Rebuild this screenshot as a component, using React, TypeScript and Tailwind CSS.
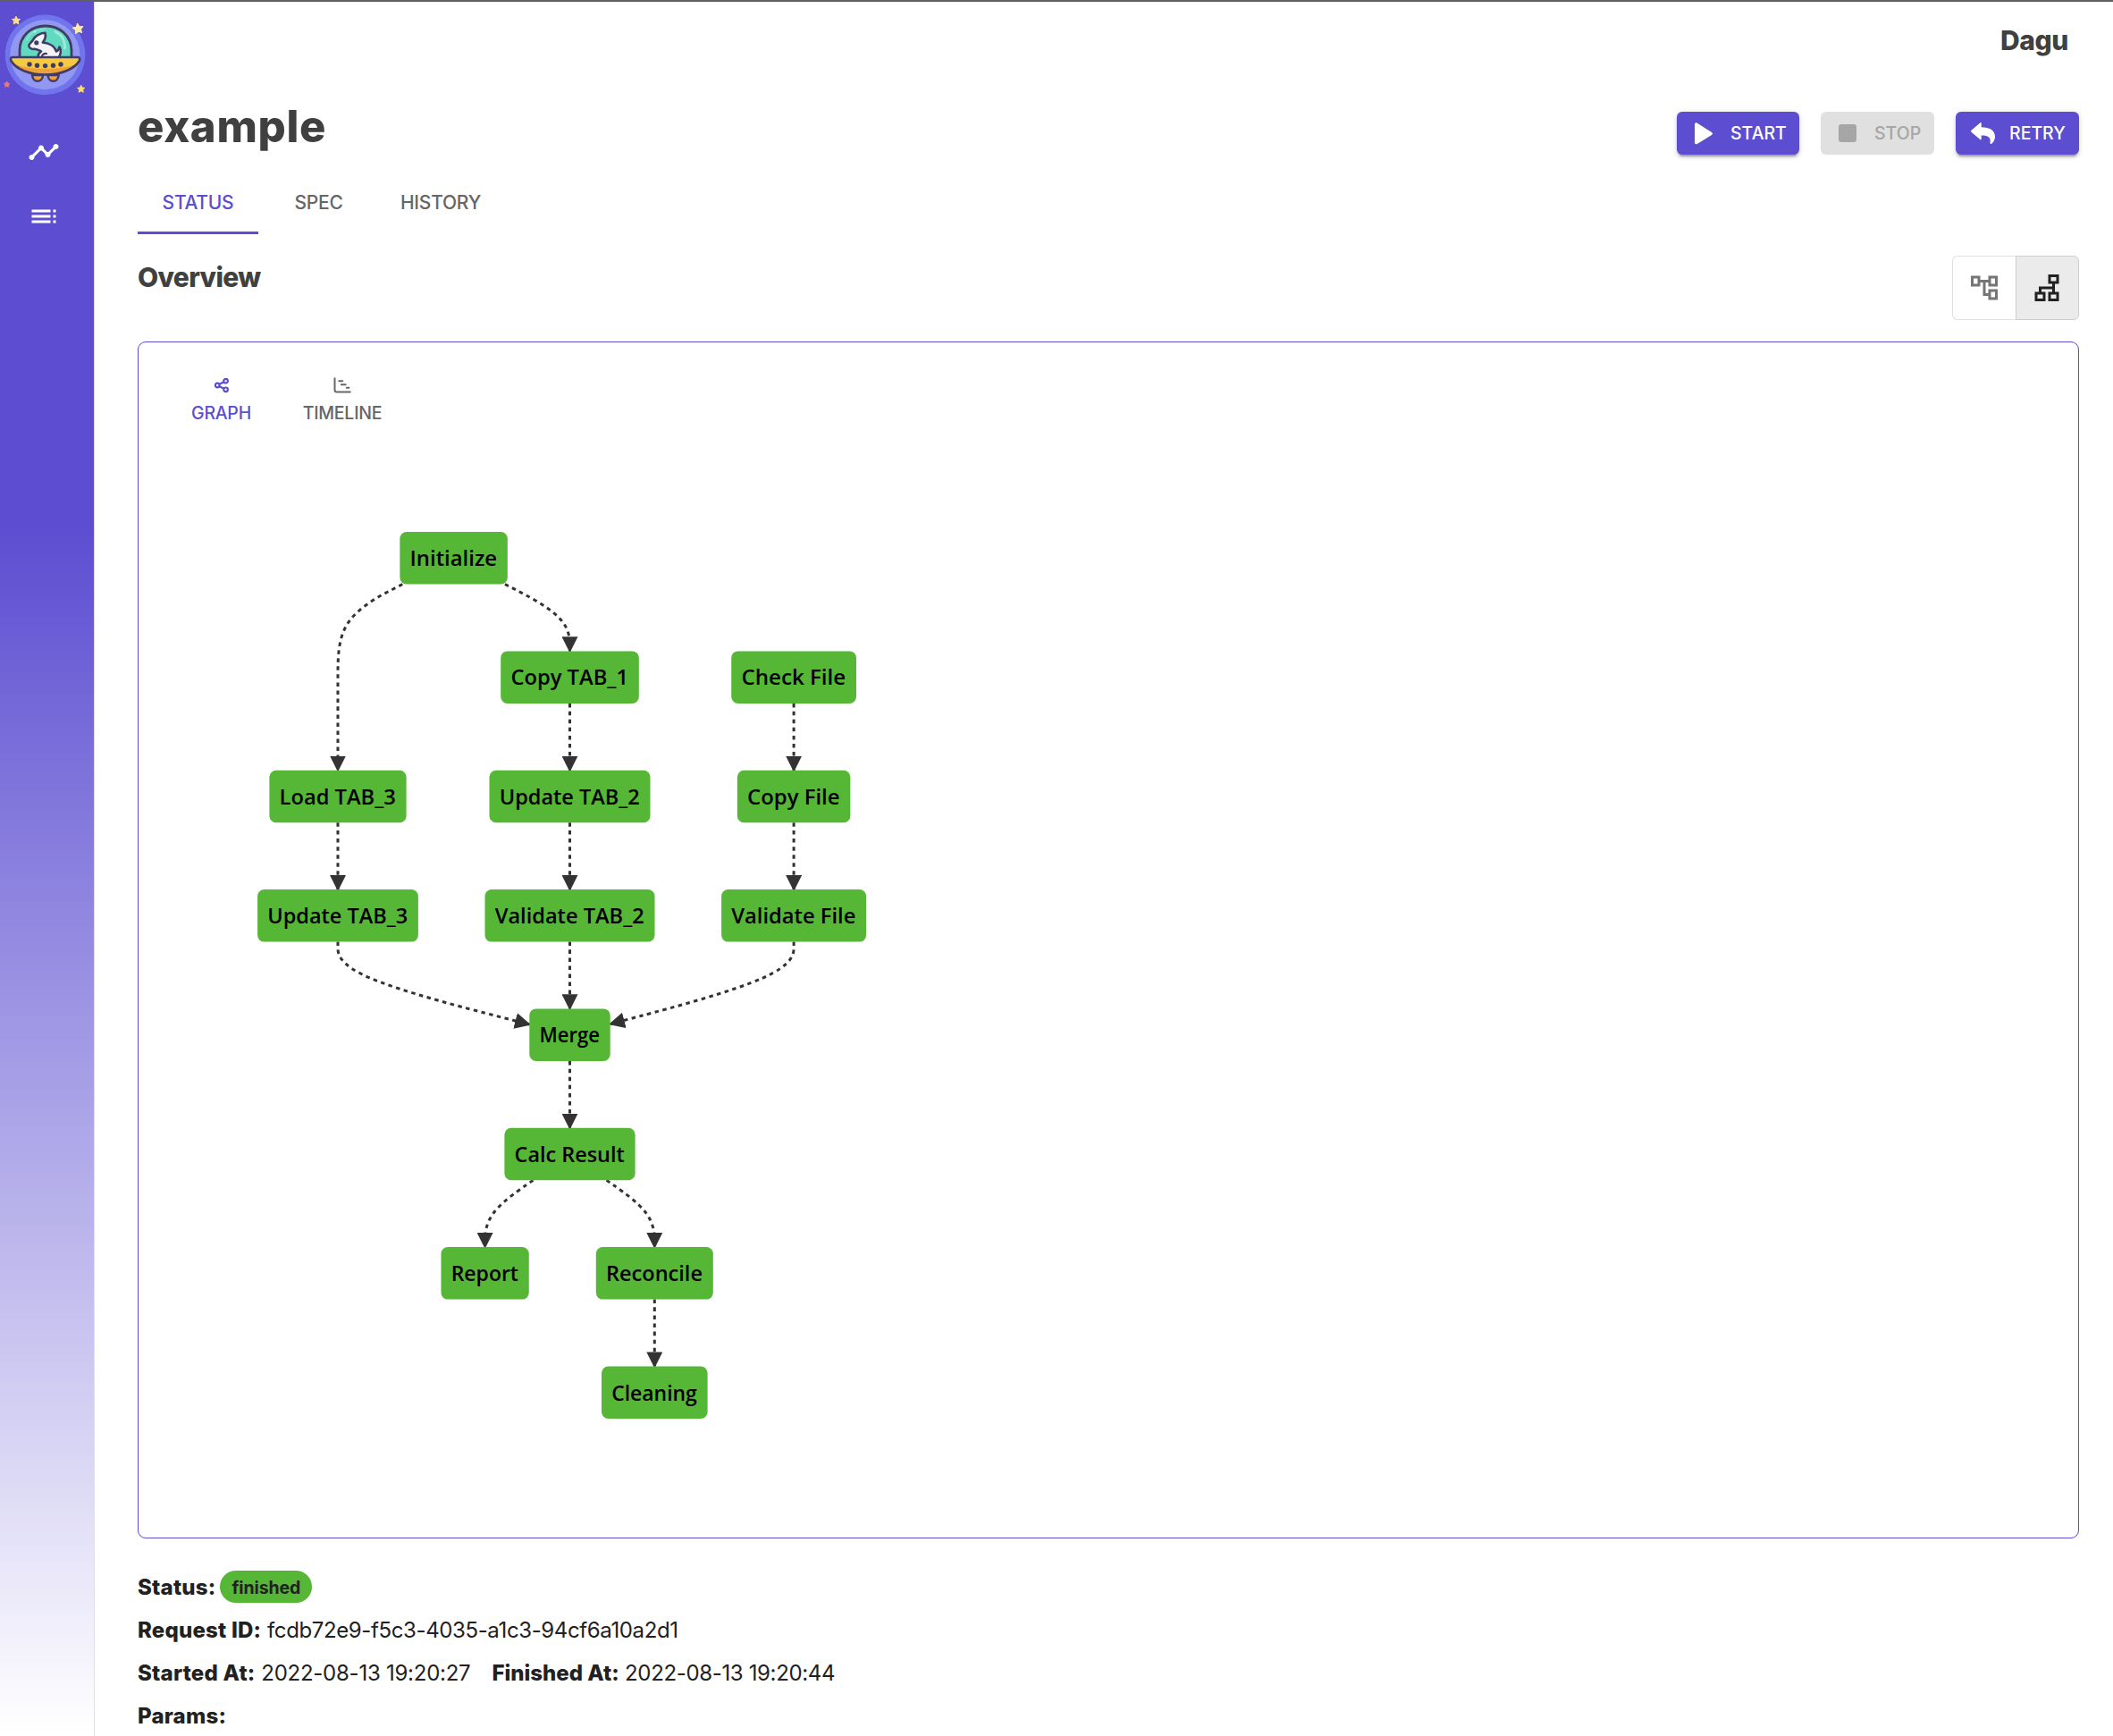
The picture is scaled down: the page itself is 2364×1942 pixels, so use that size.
import React from "react";
import { MdTimeline, MdToc, MdOutlineAccountTree } from "react-icons/md";

type Point = [number, number];

interface GraphNode {
  label: string;
  x: number;
  y: number;
  w: number;
}

const NODE_HEIGHT = 58.5;

// Node coordinates are relative to the graph canvas; x is the centre, y the top edge.
const nodes: GraphNode[] = [
  { label: "Initialize", x: 352.6, y: 95, w: 120.5 },
  { label: "Copy TAB_1", x: 482.5, y: 228.4, w: 154.6 },
  { label: "Check File", x: 733.1, y: 228.4, w: 139.8 },
  { label: "Load TAB_3", x: 223, y: 361.7, w: 153.2 },
  { label: "Update TAB_2", x: 482.5, y: 361.7, w: 180 },
  { label: "Copy File", x: 733.1, y: 361.7, w: 126.5 },
  { label: "Update TAB_3", x: 223, y: 495.1, w: 179.8 },
  { label: "Validate TAB_2", x: 482.5, y: 495.1, w: 190 },
  { label: "Validate File", x: 733.1, y: 495.1, w: 162 },
  { label: "Merge", x: 482.5, y: 628.4, w: 90.4 },
  { label: "Calc Result", x: 482.5, y: 761.8, w: 146.2 },
  { label: "Report", x: 387.6, y: 895.1, w: 98.3 },
  { label: "Reconcile", x: 577.3, y: 895.1, w: 131 },
  { label: "Cleaning", x: 577.3, y: 1028.5, w: 118.6 },
];

const down = (x: number, y: number): Point[] => [
  [x, y],
  [x, y + 37.5],
  [x, y + 75],
];

const edges: Point[][] = [
  [[295.3, 153.5], [223, 191], [223, 257.7], [223, 324.3], [223, 361.7]],
  [[409.9, 153.5], [482.5, 191], [482.5, 228.4]],
  down(482.5, 286.9),
  down(482.5, 420.2),
  down(482.5, 553.5),
  down(482.5, 686.9),
  down(733.1, 286.9),
  down(733.1, 420.2),
  down(223, 420.2),
  [[223, 553.6], [223, 591], [437.3, 646]],
  [[733.1, 553.6], [733.1, 591], [527.7, 645.6]],
  [[441.4, 820.3], [387.6, 857.7], [387.6, 895.1]],
  [[523.6, 820.3], [577.3, 857.7], [577.3, 895.1]],
  down(577.3, 953.6),
];

// Uniform cubic B-spline through the control points, clamped at both ends.
function basisPath(pts: Point[]): string {
  const at = (a: Point, b: Point, wa: number, wb: number, d: number) =>
    `${(wa * a[0] + wb * b[0]) / d},${(wa * a[1] + wb * b[1]) / d}`;
  const p = [...pts, pts[pts.length - 1]];
  let d = `M${p[0].join(",")}L${at(p[0], p[1], 5, 1, 6)}`;
  for (let i = 2; i < p.length; i++) {
    const [a, b, c] = [p[i - 2], p[i - 1], p[i]];
    const ex = (a[0] + 4 * b[0] + c[0]) / 6;
    const ey = (a[1] + 4 * b[1] + c[1]) / 6;
    d += `C${at(a, b, 2, 1, 3)} ${at(a, b, 1, 2, 3)} ${ex},${ey}`;
  }
  return `${d}L${p[p.length - 1].join(",")}`;
}

function Graph() {
  return (
    <svg width="900" height="1140" className="block">
      <defs>
        <marker
          id="arrow"
          viewBox="0 0 10 10"
          refX="9"
          refY="5"
          markerUnits="userSpaceOnUse"
          markerWidth="18"
          markerHeight="18"
          orient="auto"
        >
          <path d="M0 0L10 5L0 10z" fill="#333333" />
        </marker>
      </defs>
      {edges.map((pts, i) => (
        <path
          key={i}
          d={basisPath(pts)}
          fill="none"
          stroke="#333333"
          strokeWidth="3"
          strokeDasharray="4.5"
          markerEnd="url(#arrow)"
        />
      ))}
      {nodes.map((n) => (
        <g key={n.label}>
          <rect x={n.x - n.w / 2} y={n.y} width={n.w} height={NODE_HEIGHT} rx="7.5" fill="#55b735" />
          <text
            x={n.x - n.w / 2 + 11.2}
            y={n.y + 38}
            textLength={n.w - 23}
            lengthAdjust="spacingAndGlyphs"
            className="text-[24px] font-semibold [font-family:'Open_Sans',sans-serif]"
          >
            {n.label}
          </text>
        </g>
      ))}
    </svg>
  );
}

function Star({ x, y, r, fill, rotate = 0 }: { x: number; y: number; r: number; fill: string; rotate?: number }) {
  return (
    <path
      transform={`translate(${x} ${y}) rotate(${rotate}) scale(${r})`}
      d="M0-1L.3-.38 .95-.31 .48.15 .59.81 0 .5-.59.81-.48.15-.95-.31-.3-.38z"
      fill={fill}
      stroke={fill}
      strokeWidth=".2"
      strokeLinejoin="round"
    />
  );
}

function Logo() {
  return (
    <svg width="105" height="110" viewBox="0 0 105 110" className="block">
      <circle cx="50.6" cy="59.3" r="44.8" fill="#7075ee" />
      <circle cx="50.3" cy="59.3" r="39" fill="#9297f2" />
      <path d="M36 82c.6 9 11.400 9 12.200 0z" fill="#f0a13a" stroke="#403c66" strokeWidth="2.400" />
      <path d="M53.500 82c.6 9 11.400 9 12.200 0z" fill="#f0a13a" stroke="#403c66" strokeWidth="2.400" />
      <path d="M22 63V54.500C22 38 35 27 50.800 27S80 38 80 54.500V63z" fill="#62d9c1" stroke="#403c66" strokeWidth="2.800" />
      <path d="M62 33.500C69 37 73 43 72.500 52" fill="none" stroke="#9deadb" strokeWidth="3" strokeLinecap="round" />
      <path d="M30 43C33 35 40 31 50 31" fill="none" stroke="#86e6d2" strokeWidth="1.500" strokeLinecap="round" />
      <path
        d="M43 63C42 60 44 57 46 55.500C43 54 40 52.500 38 52.800C35.500 53.500 32 51.500 32.300 48.500C33.500 46 35.500 45 37 42.500C39 38 45 35 50.500 34.800C51.500 39 50 43 47.800 45.500C54 46 61 49 63 55.500C65 55 66 53 66.500 50.500C69 54 68 60 65 63z"
        fill="#f3f2f7"
        stroke="#403c66"
        strokeWidth="2.600"
        strokeLinejoin="round"
      />
      <path d="M47 62C46.500 59.500 49 57.500 52 58" fill="none" stroke="#403c66" strokeWidth="2.200" strokeLinecap="round" />
      <circle cx="40.800" cy="45.800" r="2.600" fill="#403c66" />
      <path
        d="M14 62H87C89 62 90 64 88.500 66.500C83 75 69 81.500 50.600 81.500S18 75 12.700 66.500C11.300 64 12 62 14 62z"
        fill="#f6c945"
      />
      <path d="M14 68.500C28 77 73 77 87.500 68.500C80 78 67 81.500 50.600 81.500S21 78 14 68.500z" fill="#f0a13a" />
      <path
        d="M14 62H87C89 62 90 64 88.500 66.500C83 75 69 81.500 50.600 81.500S18 75 12.700 66.500C11.300 64 12 62 14 62z"
        fill="none"
        stroke="#403c66"
        strokeWidth="2.600"
      />
      {[
        [33, 70],
        [41.5, 71.2],
        [50.6, 71.6],
        [59.5, 71.2],
        [68, 70],
      ].map(([x, y]) => (
        <circle key={x} cx={x} cy={y} r="2.700" fill="#403c66" />
      ))}
      <circle cx="39" cy="33.500" r=".9" fill="#fff" />
      <Star x={18} y={21} r={4.8} fill="#f8e089" />
      <Star x={87.4} y={30.2} r={5.9} fill="#faebab" rotate={-8} />
      <Star x={7.7} y={92.5} r={3.6} fill="#ec7d76" />
      <Star x={90.7} y={97.7} r={4.4} fill="#f8dc74" />
    </svg>
  );
}

function PlayIcon() {
  return (
    <svg width="20" height="25" viewBox="0 0 20 25" fill="currentColor">
      <path d="M0 2.200C0 .6 1.500-.1 2.900.7L19 10.900C20.300 11.800 20.300 13.200 19 14.100L2.900 24C1.500 24.800 0 24.100 0 22.500z" />
    </svg>
  );
}

function RetryIcon() {
  return (
    <svg width="27" height="24" viewBox="0 0 27 24" fill="currentColor">
      <path d="M.5 8.800L10.300.4C11 -.2 11.700.100 11.700 1V5.300C20.500 5.400 27 8.500 27 16C27 19 25.500 22 23.200 23.700C22.300 24.300 21.300 23.800 21.500 22.700C22.600 16.500 19.500 14.500 11.700 14.400V18.500C11.700 19.400 11 19.700 10.300 19.100L.5 10.700C-.1 10.100-.1 9.400.5 8.800z" />
    </svg>
  );
}

function ShareIcon() {
  return (
    <svg width="18" height="18" viewBox="0 0 18 18" fill="none" stroke="currentColor" strokeWidth="2.200">
      <circle cx="4.200" cy="9" r="2.300" />
      <circle cx="13.600" cy="4.200" r="2.300" />
      <circle cx="13.600" cy="13.800" r="2.300" />
      <path d="M6 8L11.500 5.200M6 10L11.500 12.800" />
    </svg>
  );
}

function GanttIcon() {
  return (
    <svg width="20" height="18" viewBox="0 0 20 18" fill="none" stroke="currentColor" strokeWidth="2" strokeLinecap="round">
      <path d="M1.500 1.300V14.200Q1.500 16.500 3.800 16.500H18.700M6.300 4.300H10.200M8.800 8.200H13.700M14.800 11.700H17.400" />
    </svg>
  );
}

function ActionButton({ children, className }: { children: React.ReactNode; className: string }) {
  return (
    <button className={`flex h-12 items-center rounded-[6px] text-[19.5px] font-medium ${className}`}>
      {children}
    </button>
  );
}

function Label({ children }: { children: React.ReactNode }) {
  return <b className="font-extrabold tracking-[0.22px]">{children}</b>;
}

const raised =
  "bg-[#5c4dd1] text-white shadow-[0_4.500px_1.500px_-3px_rgba(0,0,0,0.2),0_3px_3px_rgba(0,0,0,0.14),0_1.500px_7.500px_rgba(0,0,0,0.12)]";

export default function App() {
  return (
    <div className="flex h-[1942px] w-full flex-col overflow-hidden bg-white text-[#212121] [font-family:Inter,sans-serif]">
      <div className="h-[2px] shrink-0 bg-[#5f5f63]" />
      <div className="flex min-h-0 flex-1">
        <aside className="flex w-[106px] shrink-0 flex-col border-r border-[#e0e0e0] bg-[linear-gradient(180deg,#5c4dd1_0%,#5c4dd1_30%,#ffffff_100%)] text-white">
          <Logo />
          <nav className="flex flex-col gap-9 pt-[40px] pl-[31px]">
            <MdTimeline size={36} />
            <MdToc size={36} />
          </nav>
        </aside>

        <main className="flex min-w-0 flex-1 flex-col pr-[38px] pl-12">
          <header className="flex h-[88px] shrink-0 items-center justify-end pr-[12px] pb-[2px] text-[30px] font-extrabold tracking-[-0.4px] text-[#404040]">
            Dagu
          </header>

          <div className="flex h-[100px] shrink-0 items-start justify-between">
            <h1 className="mt-[22px] text-[49px] leading-[60px] font-extrabold tracking-[0.7px] text-[#404040]">
              example
            </h1>
            <div className="mt-[35px] flex gap-6">
              <ActionButton className={`w-[137px] gap-[20px] pl-5 ${raised}`}>
                <PlayIcon />
                <span className="pt-[2px]">START</span>
              </ActionButton>
              <ActionButton className="w-[127px] gap-[20px] bg-[#e0e0e0] pl-5 text-[#a6a6a6]">
                <span className="size-5 rounded-[3px] bg-[#a6a6a6]" />
                <span className="pt-[2px]">STOP</span>
              </ActionButton>
              <ActionButton className={`w-[138px] gap-[16px] pl-[17px] ${raised}`}>
                <RetryIcon />
                <span className="pt-[2px]">RETRY</span>
              </ActionButton>
            </div>
          </div>

          <div className="flex h-[72px] shrink-0 text-[21px] font-medium tracking-[-0.25px] text-[#666666]">
            <div className="flex w-[135px] items-center justify-center border-b-[3px] border-[#5c4dd1] pt-[5px] text-[#5c4dd1]">
              STATUS
            </div>
            <div className="flex w-[135px] items-center justify-center pt-[2px]">SPEC</div>
            <div className="flex w-[138px] items-center justify-center pt-[2px]">HISTORY</div>
          </div>

          <div className="flex h-[120px] shrink-0 items-start justify-between pt-6">
            <h2 className="text-[30px] leading-[48px] font-extrabold tracking-[-0.65px] text-[#404040]">Overview</h2>
            <div className="flex h-[72px] w-[142px]">
              <button className="flex flex-1 items-center justify-center rounded-l-[6px] border border-r-0 border-[#e0e0e0] text-[#757575]">
                <MdOutlineAccountTree size={36} />
              </button>
              <button className="flex flex-1 items-center justify-center rounded-r-[6px] border border-[#cecece] bg-[#ebebeb] text-[#212121]">
                <MdOutlineAccountTree size={36} className="rotate-90" />
              </button>
            </div>
          </div>

          <section className="flex h-[1339px] shrink-0 flex-col rounded-[9px] border border-[#5c4dd1]">
            <div className="flex h-[117px] shrink-0 pt-[39px] pl-[25px] text-[19.5px] leading-[24px] font-medium tracking-[-0.25px] text-[#666666]">
              <div className="flex w-[135px] flex-col items-center gap-[10px] text-[#5c4dd1]">
                <ShareIcon />
                GRAPH
              </div>
              <div className="flex w-[136px] flex-col items-center gap-[10px]">
                <GanttIcon />
                TIMELINE
              </div>
            </div>
            <Graph />
          </section>

          <div className="mt-[31px] flex h-[190px] shrink-0 flex-col text-[24px] leading-[48px] whitespace-nowrap">
            <div className="flex h-12 shrink-0 items-center gap-[5px]">
              <Label>Status:</Label>
              <span className="mb-[2px] flex h-9 w-[103px] items-center justify-center rounded-full bg-[#55b735] pt-[2px] text-[19.5px] font-bold tracking-[-0.1px]">
                finished
              </span>
            </div>
            <div>
              <Label>Request ID:</Label>{" "}
              <span className="tracking-[-0.38px]">fcdb72e9-f5c3-4035-a1c3-94cf6a10a2d1</span>
            </div>
            <div className="flex gap-6">
              <div>
                <Label>Started At:</Label> <span className="tracking-[-0.25px]">2022-08-13 19:20:27</span>
              </div>
              <div className="tracking-[-0.35px]">
                <b className="font-extrabold tracking-normal">Finished At:</b> 2022-08-13 19:20:44
              </div>
            </div>
            <div>
              <Label>Params:</Label>
            </div>
          </div>
        </main>
      </div>
    </div>
  );
}
